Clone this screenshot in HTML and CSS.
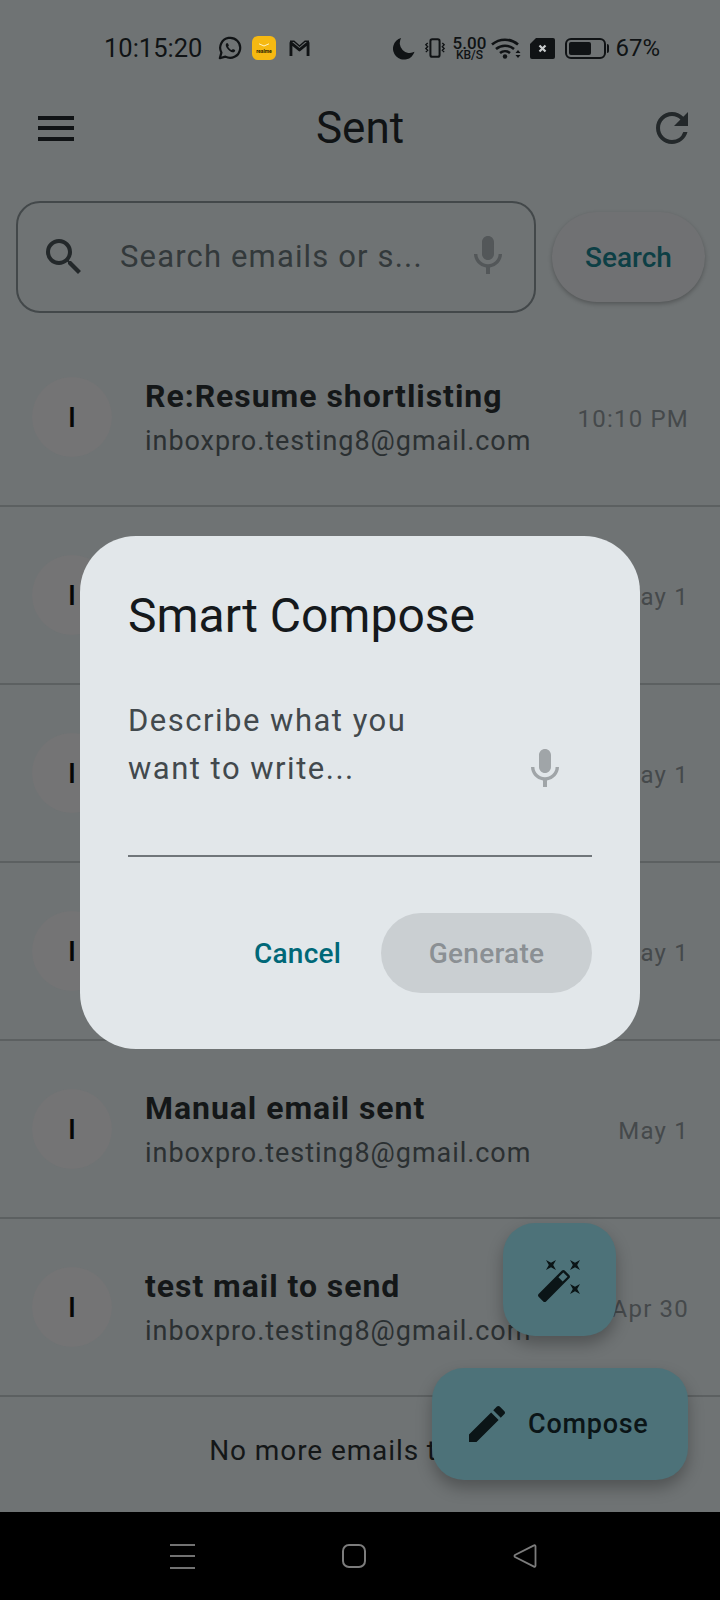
FILE: index.html
```html
<!DOCTYPE html>
<html lang="en">
<head>
<meta charset="utf-8">
<title>Sent</title>
<link rel="stylesheet" href="styles.css">
</head>
<body>
<div class="screen">
  <div class="status">
    <span class="clock">10:15:20</span>
    <svg class="s-wa" viewBox="0 0 24 24"><path d="M1.8 22.2l1.6-5.6A10 10 0 1 1 7.4 20.6z" fill="none" stroke="#101315" stroke-width="2.2" stroke-linejoin="round"/><path d="M8.6 7.2c-.5.4-1 1.2-.8 2.3.4 2.6 3.6 6 6.6 6.8 1.2.3 2.1-.3 2.5-1 .3-.5.3-1 .2-1.2l-2.2-1.1-1 1.1c-1.5-.5-3.1-2-3.8-3.7l.8-1-1-2.2z" fill="#101315"/></svg>
    <div class="s-realme">
      <svg class="s-realme-mark" viewBox="0 0 12 4"><path d="M1 .8L6 3l5-2.2" fill="none" stroke="#fff3c4" stroke-width="1"/></svg>
      <span>realme</span>
    </div>
    <svg class="s-m" viewBox="0 0 24 20"><path d="M3 18V4l9 7.5L21 4v14" fill="none" stroke="#101315" stroke-width="3" stroke-linejoin="round"/><path d="M2 2.4h4.2L12 7.4l5.8-5h4.2" fill="none" stroke="#101315" stroke-width="1.4"/></svg>
    <span class="s-gap"></span>
    <svg class="s-moon" viewBox="0 0 24 24"><path d="M9.5 1A11.5 11.5 0 1 0 23.5 15.5 10.5 10.5 0 0 1 9.5 1z" fill="#101315"/></svg>
    <svg class="s-vib" viewBox="0 0 24 24"><rect x="7" y="2.5" width="10" height="19" rx="2" fill="none" stroke="#101315" stroke-width="2.2"/><path d="M4 6.5L2 8.5l2 2-2 2 2 2-2 2M20 6.5l2 2-2 2 2 2-2 2 2 2" fill="none" stroke="#101315" stroke-width="1.5"/></svg>
    <div class="s-net"><span class="s-net-a">5.00</span><span class="s-net-b">KB/S</span></div>
    <svg class="s-wifi" viewBox="0 0 30 22"><path d="M1 7.5a20 20 0 0 1 26 0M5 12a14 14 0 0 1 18 0M9 16a8 8 0 0 1 10 0" fill="none" stroke="#101315" stroke-width="2.6"/><circle cx="14" cy="19.5" r="2.2" fill="#101315"/><path d="M27 13l2.5 3h-5zM27 21l2.5-3h-5z" fill="#101315"/></svg>
    <svg class="s-sim" viewBox="0 0 25 21"><path d="M6 0h17a2 2 0 0 1 2 2v17a2 2 0 0 1-2 2H2a2 2 0 0 1-2-2V6z" fill="#101315"/><path d="M9.5 7.5l6 6M15.5 7.5l-6 6" stroke="#c9cccd" stroke-width="2.2"/></svg>
    <div class="s-batt"><div class="s-batt-fill"></div></div>
    <span class="s-batt-tip"></span>
    <span class="s-pct">67%</span>
  </div>

  <header class="appbar">
    <div class="menu"><i></i><i></i><i></i></div>
    <h1>Sent</h1>
    <svg class="refresh" viewBox="0 0 24 24"><path d="M17.65 6.35A7.958 7.958 0 0 0 12 4c-4.42 0-7.99 3.58-7.99 8s3.57 8 7.99 8c3.73 0 6.84-2.55 7.73-6h-2.08A5.99 5.99 0 0 1 12 18c-3.31 0-6-2.69-6-6s2.69-6 6-6c1.66 0 3.14.69 4.22 1.78L13 11h7V4l-2.35 2.35z"/></svg>
  </header>

  <div class="search-row">
    <div class="search-box">
      <svg class="search-icon" viewBox="0 0 24 24"><path d="M15.5 14h-.79l-.28-.27A6.471 6.471 0 0 0 16 9.5 6.5 6.5 0 1 0 9.5 16c1.61 0 3.09-.59 4.23-1.57l.27.28v.79l5 4.99L20.49 19l-4.99-5zm-6 0C7.01 14 5 11.99 5 9.5S7.01 5 9.5 5 14 7.01 14 9.5 11.99 14 9.5 14z"/></svg>
      <span class="search-ph">Search emails or s...</span>
      <svg class="search-mic" viewBox="0 0 24 24"><path d="M12 14c1.66 0 2.99-1.34 2.99-3L15 5c0-1.66-1.34-3-3-3S9 3.34 9 5v6c0 1.66 1.34 3 3 3zm5.3-3c0 3-2.54 5.1-5.3 5.1S6.7 14 6.7 11H5c0 3.41 2.72 6.23 6 6.72V21h2v-3.28c3.28-.48 6-3.3 6-6.72h-1.7z"/></svg>
    </div>
    <div class="search-btn">Search</div>
  </div>

  <main class="list">
    <div class="row">
      <div class="avatar">I</div>
      <div class="text"><div class="subject">Re:Resume shortlisting</div><div class="addr">inboxpro.testing8@gmail.com</div></div>
      <div class="date">10:10 PM</div>
    </div>
    <div class="row">
      <div class="avatar">I</div>
      <div class="text"><div class="subject">Manual email sent</div><div class="addr">inboxpro.testing8@gmail.com</div></div>
      <div class="date">May 1</div>
    </div>
    <div class="row">
      <div class="avatar">I</div>
      <div class="text"><div class="subject">Manual email sent</div><div class="addr">inboxpro.testing8@gmail.com</div></div>
      <div class="date">May 1</div>
    </div>
    <div class="row">
      <div class="avatar">I</div>
      <div class="text"><div class="subject">Manual email sent</div><div class="addr">inboxpro.testing8@gmail.com</div></div>
      <div class="date">May 1</div>
    </div>
    <div class="row">
      <div class="avatar">I</div>
      <div class="text"><div class="subject">Manual email sent</div><div class="addr">inboxpro.testing8@gmail.com</div></div>
      <div class="date">May 1</div>
    </div>
    <div class="row">
      <div class="avatar">I</div>
      <div class="text"><div class="subject">test mail to send</div><div class="addr">inboxpro.testing8@gmail.com</div></div>
      <div class="date">Apr 30</div>
    </div>
    <div class="end">No more emails to load</div>
  </main>

  <nav class="navbar">
    <div class="nav-menu"><i></i><i></i><i></i></div>
    <div class="nav-home"></div>
    <svg class="nav-back" viewBox="0 0 24 24"><path d="M22.5 2.2v19.6a1 1 0 0 1-1.5.8L2 13a1.2 1.2 0 0 1 0-2L21 1.4a1 1 0 0 1 1.5.8z" fill="none" stroke="#7c7c7c" stroke-width="1.8"/></svg>
  </nav>

  <div class="fab fab-magic">
    <svg viewBox="0 0 24 24"><path d="M7.5 5.6L10 7 8.6 4.5 10 2 7.5 3.4 5 2l1.4 2.5L5 7zm12 9.8L17 14l1.4 2.5L17 19l2.5-1.4L22 19l-1.4-2.5L22 14zM22 2l-2.5 1.4L17 2l1.4 2.5L17 7l2.5-1.4L22 7l-1.4-2.5zm-7.63 5.29c-.39-.39-1.02-.39-1.41 0L1.29 18.96c-.39.39-.39 1.02 0 1.41l2.34 2.34c.39.39 1.02.39 1.41 0L16.7 11.05c.39-.39.39-1.02 0-1.41l-2.33-2.35zm-1.03 5.49l-2.12-2.12 2.44-2.44 2.12 2.12-2.44 2.44z"/></svg>
  </div>
  <div class="fab fab-compose">
    <svg viewBox="0 0 24 24"><path d="M3 17.25V21h3.75L17.81 9.94l-3.75-3.75L3 17.25zM20.71 7.04c.39-.39.39-1.02 0-1.41l-2.34-2.34c-.39-.39-1.02-.39-1.41 0l-1.83 1.83 3.75 3.75 1.83-1.83z"/></svg>
    <span>Compose</span>
  </div>

  <section class="dialog">
    <h2>Smart Compose</h2>
    <div class="field">
      <div class="field-ph">Describe what you<br>want to write...</div>
      <svg class="field-mic" viewBox="0 0 24 24"><path d="M12 14c1.66 0 2.99-1.34 2.99-3L15 5c0-1.66-1.34-3-3-3S9 3.34 9 5v6c0 1.66 1.34 3 3 3zm5.3-3c0 3-2.54 5.1-5.3 5.1S6.7 14 6.7 11H5c0 3.41 2.72 6.23 6 6.72V21h2v-3.28c3.28-.48 6-3.3 6-6.72h-1.7z"/></svg>
    </div>
    <div class="actions">
      <span class="cancel">Cancel</span>
      <span class="generate">Generate</span>
    </div>
  </section>
</div>
</body>
</html>
```
FILE: styles.css
```css
* { box-sizing: border-box; }
html, body { margin: 0; padding: 0; }
body { width: 720px; height: 1600px; overflow: hidden; font-family: Roboto, "Liberation Sans", sans-serif; }
.screen { position: relative; width: 720px; height: 1600px; display: flex; flex-direction: column; background: #6f7374; color: #101315; overflow: hidden; }

.status { height: 96px; flex: none; display: flex; align-items: center; padding: 0 60px 0 104px; }
.clock { font-size: 25.5px; width: 114px; }
.s-wa { width: 24px; height: 24px; }
.s-realme { width: 24px; height: 24px; margin-left: 10px; border-radius: 6px; background: #f6b912; display: flex; flex-direction: column; align-items: center; justify-content: center; gap: 2px; line-height: 5px; }
.s-realme-mark { width: 12px; height: 4px; }
.s-realme span { font-size: 5px; font-weight: 700; color: #2a2000; }
.s-m { width: 23px; height: 19px; margin-left: 12px; }
.s-gap { flex: 1; }
.s-moon { width: 23px; height: 23px; margin-left: -2px; }
.s-vib { width: 22px; height: 24px; margin-left: 9px; }
.s-net { width: 36px; margin-left: 5px; display: flex; flex-direction: column; align-items: center; line-height: 1; }
.s-net-a { font-size: 17px; font-weight: 500; height: 14px; }
.s-net-b { font-size: 12px; font-weight: 500; }
.s-wifi { width: 30px; height: 22px; margin-left: 4px; }
.s-sim { width: 25px; height: 21px; margin-left: 9px; }
.s-batt { width: 41px; height: 21px; margin-left: 10px; border: 2px solid #101315; border-radius: 6px; padding: 2px; }
.s-batt-fill { width: 65%; height: 100%; background: #101315; border-radius: 2px; }
.s-batt-tip { width: 2px; height: 9px; margin-left: 1px; background: #101315; border-radius: 0 2px 2px 0; }
.s-pct { font-size: 24px; margin-left: 6px; }

.appbar { height: 64px; flex: none; display: flex; align-items: center; justify-content: space-between; padding: 0 24px 0 38px; }
.menu { width: 36px; height: 25px; display: flex; flex-direction: column; justify-content: space-between; }
.menu i { display: block; height: 4px; background: #101315; }
.appbar h1 { margin: 0; font-size: 44px; font-weight: 400; flex: 1; text-align: center; padding-right: 2px; }
.refresh { width: 48px; height: 48px; fill: #23282a; }

.search-row { flex: none; display: flex; align-items: center; height: 112px; margin-top: 41px; padding: 0 15px 0 16px; gap: 16px; }
.search-box { width: 520px; height: 112px; border: 2px solid #43484a; border-radius: 24px; display: flex; align-items: center; padding: 0 22px 0 22px; }
.search-icon { width: 48px; height: 48px; fill: #23282a; flex: none; }
.search-ph { font-size: 31px; letter-spacing: 1.15px; line-height: 40px; color: #33393b; margin-left: 32px; margin-bottom: 1px; flex: 1; white-space: nowrap; }
.search-mic { width: 48px; height: 48px; fill: #535759; flex: none; margin-bottom: 2px; }
.search-btn { flex: 1; height: 90px; border-radius: 45px; background: #707173; box-shadow: 0 2px 4px rgba(0,0,0,.25); display: flex; align-items: center; justify-content: center; font-size: 28px; font-weight: 500; color: #0d3f45; }

.list { flex: 1; margin-top: 16px; display: flex; flex-direction: column; }
.row { height: 178px; flex: none; display: flex; align-items: center; padding: 0 31px 0 32px; border-bottom: 2px solid #5c6061; }
.avatar { width: 80px; height: 80px; border-radius: 50%; background: #747475; display: flex; align-items: center; justify-content: center; font-size: 28px; font-weight: 500; color: #060606; flex: none; }
.text { flex: 1; margin-left: 33px; min-width: 0; padding-top: 3px; }
.subject { font-size: 32px; font-weight: 700; letter-spacing: .95px; line-height: 44px; color: #141718; white-space: nowrap; }
.addr { font-size: 27px; letter-spacing: .95px; line-height: 46px; color: #2b3032; white-space: nowrap; }
.date { font-size: 24px; letter-spacing: 1.2px; color: #45494b; white-space: nowrap; padding-top: 3px; }
.end { flex: 1; text-align: center; font-size: 28px; letter-spacing: .9px; line-height: 108px; padding-left: 8px; color: #141718; }

.navbar { height: 88px; flex: none; background: #000; display: flex; align-items: center; }
.nav-menu { width: 25px; height: 25px; margin-left: 170px; display: flex; flex-direction: column; justify-content: space-between; }
.nav-menu i { display: block; height: 2px; background: #727272; }
.nav-home { width: 24px; height: 24px; margin-left: 147px; border: 2px solid #7c7c7c; border-radius: 7px; }
.nav-back { width: 24px; height: 24px; margin-left: 147px; }

.fab { position: absolute; background: #4d7279; border-radius: 32px; box-shadow: 0 8px 16px rgba(0,0,0,.28); display: flex; align-items: center; }
.fab svg { width: 48px; height: 48px; fill: #0b1517; flex: none; }
.fab-magic { left: 503px; top: 1223px; width: 113px; height: 113px; justify-content: center; }
.fab-compose { left: 432px; top: 1368px; width: 256px; height: 112px; padding-left: 31px; }
.fab-compose span { margin-left: 17px; font-size: 27px; font-weight: 500; letter-spacing: .75px; color: #0b1517; }

.dialog { position: absolute; left: 80px; top: 536px; width: 560px; height: 513px; border-radius: 56px; background: #e2e7ea; padding: 50px 48px 0; display: flex; flex-direction: column; }
.dialog h2 { margin: 0; font-size: 48px; font-weight: 400; line-height: 60px; color: #15191c; }
.field { margin-top: 34px; height: 177px; border-bottom: 2px solid #70767a; position: relative; }
.field-ph { padding-top: 17px; font-size: 31px; letter-spacing: 1.5px; line-height: 48px; color: #42494d; }
.field-mic { position: absolute; right: 23px; top: 65px; width: 48px; height: 48px; fill: #a0a5a8; }
.actions { margin-top: 56px; display: flex; align-items: center; justify-content: flex-end; }
.cancel { font-size: 28px; font-weight: 500; letter-spacing: .2px; color: #006878; margin-right: 40px; }
.generate { width: 211px; height: 80px; border-radius: 40px; background: #cacfd2; display: flex; align-items: center; justify-content: center; font-size: 28px; font-weight: 500; letter-spacing: .25px; color: #8b9094; }
```
